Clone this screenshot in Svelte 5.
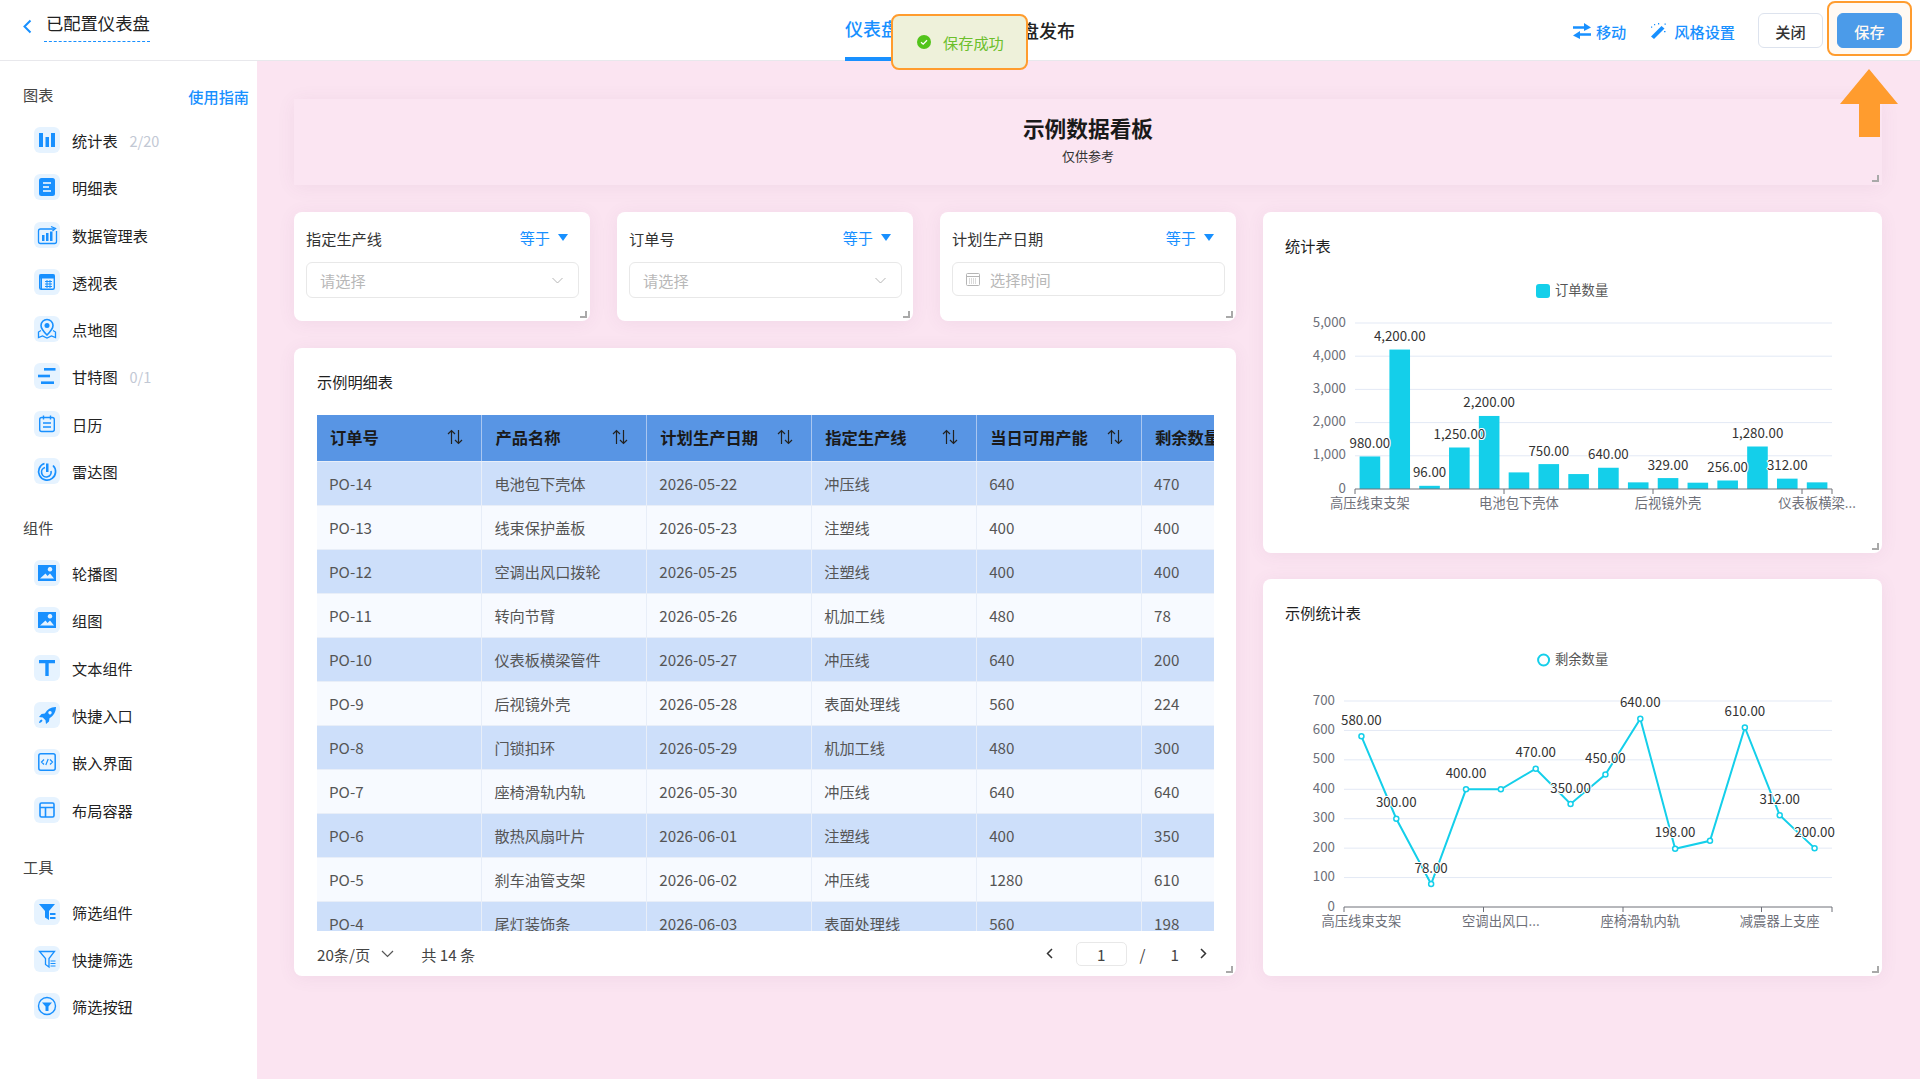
<script>
  const icons = {
    bar: '<rect x="5" y="6" width="4" height="14"/><rect x="11.5" y="10" width="3.5" height="10"/><rect x="17" y="6" width="4" height="14"/>',
    doc: '<rect x="5" y="4" width="16" height="18" rx="2.5"/><path d="M9 9h8M9 13h6M9 17h8" stroke="#fff" stroke-width="1.6" fill="none"/>',
    manage: '<g fill="none" stroke="#1890ff" stroke-width="1.3"><path d="M20 7H6.5a2 2 0 0 0-2 2v10.500a2 2 0 0 0 2 2h14a2 2 0 0 0 2-2V9"/><path d="M17 4.500l4.500 2-3 2.500" /></g><rect x="8" y="13" width="2.500" height="6"/><rect x="12" y="11" width="2.500" height="8"/><rect x="16" y="9.500" width="2.500" height="9.500"/>',
    pivot: '<g fill="none" stroke="#1890ff" stroke-width="1.400"><rect x="5.700" y="5.700" width="14.600" height="14.600" rx="1.500"/></g><rect x="5.500" y="5.500" width="15" height="4"/><rect x="6.500" y="9" width="1.500" height="11"/><path d="M11 12.500h7M11 15h7M11 17.500h7M13 11v8M16 11v8" stroke="#1890ff" fill="none" stroke-width="1"/>',
    map: '<path d="M13 3.500a6 6 0 0 0-6 6c0 3.500 4 7.500 6 9.500 2-2 6-6 6-9.500a6 6 0 0 0-6-6z" fill="none" stroke="#1890ff" stroke-width="1.600"/><circle cx="13" cy="9.500" r="2.500"/><path d="M7 14.500l-2.500 1.500v5.500l4-1.500 4.500 2 4.500-2 4 1.500v-5.500L19 14.500" fill="none" stroke="#1890ff" stroke-width="1.300"/>',
    gantt: '<rect x="10" y="5" width="11.500" height="2.600"/><rect x="4" y="11.700" width="12" height="2.600"/><rect x="7" y="18.400" width="13" height="2.600"/>',
    cal: '<g fill="none" stroke="#1890ff" stroke-width="1.400"><rect x="5.700" y="6.500" width="14.600" height="14" rx="2"/><path d="M9.500 4.500v4M16.500 4.500v4M9 12h8M9 16h8"/></g>',
    radar: '<g fill="none" stroke="#1890ff" stroke-width="1.700"><path d="M10.500 5.500a8.500 8.500 0 1 0 8.500 2"/><path d="M11 9.500a4.800 4.800 0 1 0 6 3.500"/></g><path d="M12 5.500v8.500h2.500V5.500z"/>',
    image: '<path fill-rule="evenodd" d="M4 5h18v16H4zM6 18.500h14l-4-5-2.500 2.500-2-2.500zM16 7a2.300 2.300 0 1 0 .01 0z"/>',
    text: '<path d="M5 5h16v3.200h-6.300V21h-3.400V8.200H5z"/>',
    rocket: '<path fill-rule="evenodd" d="M21.500 5c-5 .3-8.200 2.500-10.700 6.500L7.500 12 5 15l3.800.5 2.700 2.700.5 3.800 3-2.500.5-3.300c4-2.500 6.200-5.700 6.500-11.200zM16 9a1.700 1.700 0 1 0 .01 0z"/><path d="M7.500 17.500C6 18 5 19.500 5 21c1.500 0 3-1 3.500-2.500z"/>',
    embed: '<g fill="none" stroke="#1890ff"><rect x="4.800" y="4.800" width="16.400" height="16.400" rx="2" stroke-width="1.500"/><path d="M10 10.500L7.500 13l2.500 2.500M16 10.500l2.500 2.500-2.500 2.500M14.200 10l-2.400 6" stroke-width="1.200"/></g>',
    layout: '<g fill="none" stroke="#1890ff" stroke-width="1.600"><rect x="6" y="6" width="14" height="14" rx="1.500"/><path d="M6 10.500h14M11.500 10.500V20"/></g>',
    funnel: '<path d="M5 5h16l-6 7v9l-4-2.500V12z"/><rect x="16" y="14" width="5.500" height="2"/><rect x="16" y="18" width="5.500" height="2"/>',
    funnelo: '<path d="M5.500 5.500h15l-5.500 7v8.500l-3.500-2.500v-6z" fill="none" stroke="#1890ff" stroke-width="1.300"/><path d="M16.500 15h5M16.500 17.500h5M16.500 20h5" stroke="#1890ff" fill="none"/>',
    funnelb: '<circle cx="13" cy="13" r="8.500" fill="none" stroke="#1890ff" stroke-width="1.400"/><path d="M8 9.500h10l-3.500 4v4.500h-3v-4.500z"/>'
  };

  const groups = [
    { name: "图表", items: [["bar", "统计表", "2/20"], ["doc", "明细表"], ["manage", "数据管理表"], ["pivot", "透视表"], ["map", "点地图"], ["gantt", "甘特图", "0/1"], ["cal", "日历"], ["radar", "雷达图"]] },
    { name: "组件", items: [["image", "轮播图"], ["image", "组图"], ["text", "文本组件"], ["rocket", "快捷入口"], ["embed", "嵌入界面"], ["layout", "布局容器"]] },
    { name: "工具", items: [["funnel", "筛选组件"], ["funnelo", "快捷筛选"], ["funnelb", "筛选按钮"]] }
  ];

  const filters = [
    { label: "指定生产线", holder: "请选择" },
    { label: "订单号", holder: "请选择" },
    { label: "计划生产日期", holder: "选择时间", date: true }
  ];

  const columns = ["订单号", "产品名称", "计划生产日期", "指定生产线", "当日可用产能", "剩余数量"];
  const rows = [
    ["PO-14", "电池包下壳体", "2026-05-22", "冲压线", "640", "470"],
    ["PO-13", "线束保护盖板", "2026-05-23", "注塑线", "400", "400"],
    ["PO-12", "空调出风口拨轮", "2026-05-25", "注塑线", "400", "400"],
    ["PO-11", "转向节臂", "2026-05-26", "机加工线", "480", "78"],
    ["PO-10", "仪表板横梁管件", "2026-05-27", "冲压线", "640", "200"],
    ["PO-9", "后视镜外壳", "2026-05-28", "表面处理线", "560", "224"],
    ["PO-8", "门锁扣环", "2026-05-29", "机加工线", "480", "300"],
    ["PO-7", "座椅滑轨内轨", "2026-05-30", "冲压线", "640", "640"],
    ["PO-6", "散热风扇叶片", "2026-06-01", "注塑线", "400", "350"],
    ["PO-5", "刹车油管支架", "2026-06-02", "冲压线", "1280", "610"],
    ["PO-4", "尾灯装饰条", "2026-06-03", "表面处理线", "560", "198"]
  ];

  // bar chart, page coordinates
  const barVals = [980, 4200, 96, 1250, 2200, 500, 750, 450, 640, 200, 329, 190, 256, 1280, 312, 200];
  const barShown = [0, 1, 2, 3, 4, 6, 8, 10, 12, 13, 14];
  const barStep = 477 / 16;
  const barX = (i) => 1355 + (i + 0.5) * barStep;
  const barY = (v) => 489 - (v / 5000) * 166;
  const barTicks = [0, 1000, 2000, 3000, 4000, 5000];
  const barCats = [[0, "高压线束支架"], [5, "电池包下壳体"], [10, "后视镜外壳"], [15, "仪表板横梁..."]];

  const lineVals = [580, 300, 78, 400, 400, 470, 350, 450, 640, 198, 225, 610, 312, 200];
  const lineShown = [0, 1, 2, 3, 5, 6, 7, 8, 9, 11, 12, 13];
  const lineStep = 488 / 14;
  const lineX = (i) => 1344 + (i + 0.5) * lineStep;
  const lineY = (v) => 907 - (v / 700) * 206;
  const lineTicks = [0, 100, 200, 300, 400, 500, 600, 700];
  const lineCats = [[0, "高压线束支架"], [4, "空调出风口..."], [8, "座椅滑轨内轨"], [12, "减震器上支座"]];
  const linePoints = lineVals.map((v, i) => `${lineX(i)},${lineY(v)}`).join(" ");
  const fmt = (v) => v.toLocaleString("en-US", { minimumFractionDigits: 2 });
</script>

<div class="page">
  <header>
    <div class="head-left">
      <svg class="back" width="10" height="15" viewBox="0 0 10 15"><path d="M8.500 1.500L2.500 7.500l6 6" fill="none" stroke="#1890ff" stroke-width="2" /></svg>
      <span class="head-title">已配置仪表盘</span>
    </div>
    <nav>
      <span class="tab active">仪表盘配置</span>
      <span class="tab">仪表盘发布</span>
    </nav>
    <div class="head-right">
      <span class="action">
        <svg width="18" height="16" viewBox="0 0 18 16" fill="#1890ff"><path d="M11 0l7 4.500L11 8V5.700H0V3.300h11zM7 8v2.300h11v2.400H7V16l-7-3.500z" /></svg>
        移动
      </span>
      <span class="action style">
        <svg width="16" height="16" viewBox="0 0 16 16" fill="#1890ff"><path d="M11.500 3l3 2.500L4 16l-3-2.500z" /><path d="M4 1h1.200v1.200H4zM8 0h1.200v1.500H8zM14 8h1.500v1.200H14zM1 3.500h1.200v1.200H1zM14.500 0.500h1.300v1.300h-1.300z" /></svg>
        风格设置
      </span>
      <button class="btn">关闭</button>
      <button class="btn primary">保存</button>
    </div>
  </header>

  <div class="body">
    <aside>
      {#each groups as group, g}
        <div class="group">
          <div class="group-head">
            <span>{group.name}</span>
            {#if g === 0}<a href="#guide">使用指南</a>{/if}
          </div>
          {#each group.items as item}
            <div class="item">
              <span class="tile"><svg width="26" height="26" viewBox="0 0 26 26" fill="#1890ff">{@html icons[item[0]]}</svg></span>
              <span class="item-name">{item[1]}</span>
              {#if item[2]}<span class="count">{item[2]}</span>{/if}
            </div>
          {/each}
        </div>
      {/each}
    </aside>

    <main>
      <section class="title-card card">
        <h1>示例数据看板</h1>
        <p>仅供参考</p>
      </section>

      <div class="columns">
        <div class="left">
          <div class="filters">
            {#each filters as f}
              <section class="filter card">
                <div class="filter-head">
                  <span>{f.label}</span>
                  <span class="op">等于<i class="caret"></i></span>
                </div>
                {#if f.date}
                  <div class="input date">
                    <svg width="14" height="14" viewBox="0 0 14 14" fill="none" stroke="#b5b5b5"><rect x=".5" y="1.500" width="13" height="12" rx="1" /><path d="M.5 4.500h13" /><path d="M3 7h8M3 9h8M3 11h8" stroke-dasharray="1 1" /></svg>
                    <span>{f.holder}</span>
                  </div>
                {:else}
                  <div class="input">
                    <span>{f.holder}</span>
                    <svg width="11" height="7" viewBox="0 0 11 7"><path d="M.5 1l5 5 5-5" fill="none" stroke="#b5b5b5" /></svg>
                  </div>
                {/if}
              </section>
            {/each}
          </div>

          <section class="table-card card">
            <h2>示例明细表</h2>
            <div class="table-wrap">
              <table>
                <thead>
                  <tr>
                    {#each columns as c, i}
                      <th>
                        <div class="th">
                          <span>{c}</span>
                          {#if i < 5}
                            <svg width="16" height="16" viewBox="0 0 16 16" fill="none" stroke="#222" stroke-width="1.200"><path d="M4.500 15V1.500M1 5l3.500-3.500L8 5M11.500 1v13.500M8 11l3.500 3.500L15 11" /></svg>
                          {/if}
                        </div>
                      </th>
                    {/each}
                  </tr>
                </thead>
                <tbody>
                  {#each rows as row}
                    <tr>
                      {#each row as cell}<td>{cell}</td>{/each}
                    </tr>
                  {/each}
                </tbody>
              </table>
            </div>
            <div class="pager">
              <span>20条/页</span>
              <svg class="pg-down" width="13" height="8" viewBox="0 0 13 8"><path d="M1 1l5.500 5.500L12 1" fill="none" stroke="#555" stroke-width="1.200" /></svg>
              <span class="total">共 14 条</span>
              <span class="spacer"></span>
              <svg width="7" height="11" viewBox="0 0 7 11"><path d="M6 1L1.500 5.500 6 10" fill="none" stroke="#333" stroke-width="1.500" /></svg>
              <span class="page-input">1</span>
              <span>/</span>
              <span class="page-total">1</span>
              <svg width="7" height="11" viewBox="0 0 7 11"><path d="M1 1l4.500 4.500L1 10" fill="none" stroke="#333" stroke-width="1.500" /></svg>
            </div>
          </section>
        </div>

        <div class="right">
          <section class="chart-card card">
            <h2>统计表</h2>
            <svg class="chart" width="619" height="283" viewBox="1263 270 619 283">
              <rect x="1536" y="284" width="14" height="14" rx="3" fill="#14cfea" />
              <text x="1555" y="295" class="lg">订单数量</text>
              {#each barTicks as t}
                {#if t > 0}<line x1="1355" x2="1832" y1={barY(t)} y2={barY(t)} stroke="#e3e9f5" />{/if}
                <text x="1346" y={barY(t) + 3.500} text-anchor="end" class="ax">{t.toLocaleString("en-US")}</text>
              {/each}
              {#each barVals as v, i}
                <rect x={barX(i) - 10.300} y={barY(v)} width="20.600" height={489 - barY(v)} fill="#14cfea" />
              {/each}
              <path d="M1355 494V489H1832V494M1504 489v5M1653 489v5M1802 489v5" fill="none" stroke="#6e7079" stroke-width="1" />
              {#each barShown as i}
                <text x={barX(i)} y={barY(barVals[i]) - 8.500} text-anchor="middle" class="val">{fmt(barVals[i])}</text>
              {/each}
              {#each barCats as c}
                <text x={barX(c[0])} y="508" text-anchor="middle" class="ax">{c[1]}</text>
              {/each}
            </svg>
          </section>

          <section class="chart-card card tall">
            <h2>示例统计表</h2>
            <svg class="chart" width="619" height="339" viewBox="1263 637 619 339">
              <circle cx="1543.600" cy="660" r="5.500" fill="#fff" stroke="#14cfea" stroke-width="2" />
              <text x="1555" y="664" class="lg">剩余数量</text>
              {#each lineTicks as t}
                {#if t > 0}<line x1="1344" x2="1832" y1={lineY(t)} y2={lineY(t)} stroke="#e3e9f5" />{/if}
                <text x="1335" y={lineY(t) + 3.500} text-anchor="end" class="ax">{t}</text>
              {/each}
              <path d="M1344 912V907H1832V912M1483.500 907v5M1623 907v5M1761.500 907v5" fill="none" stroke="#6e7079" stroke-width="1" />
              <polyline points={linePoints} fill="none" stroke="#14cfea" stroke-width="2" />
              {#each lineVals as v, i}
                <circle cx={lineX(i)} cy={lineY(v)} r="2.500" fill="#fff" stroke="#14cfea" stroke-width="1.500" />
              {/each}
              {#each lineShown as i}
                <text x={lineX(i)} y={lineY(lineVals[i]) - 11.500} text-anchor="middle" class="val">{fmt(lineVals[i])}</text>
              {/each}
              {#each lineCats as c}
                <text x={lineX(c[0])} y="926" text-anchor="middle" class="ax">{c[1]}</text>
              {/each}
            </svg>
          </section>
        </div>
      </div>
    </main>
  </div>

  <div class="toast">
    <svg width="14" height="14" viewBox="0 0 14 14"><circle cx="7" cy="7" r="7" fill="#52c41a" /><path d="M4 7.200l2.200 2L10 5.200" fill="none" stroke="#fff" stroke-width="1.300" /></svg>
    <span>保存成功</span>
  </div>
  <div class="save-ring"></div>
  <svg class="arrow" width="60" height="69" viewBox="0 0 60 69"><path d="M30 0L59 35H41V68H20V35H1z" fill="#ff9c2e" /></svg>
</div>

<style>
  :global(body) {
    margin: 0;
    font-family: "Noto Sans CJK SC", "Noto Sans", sans-serif;
    color: #222;
  }

  .page {
    position: relative;
    width: 1920px;
    height: 1079px;
    overflow: hidden;
    background: #fbe4f1;
  }

  header {
    display: grid;
    grid-template-columns: 1fr auto 1fr;
    align-items: center;
    height: 60px;
    background: #fff;
    border-bottom: 1px solid #e8e8ec;
  }

  .head-left {
    display: flex;
    align-items: center;
    padding-left: 22px;
    height: 100%;
  }

  .back {
    margin-right: 12px;
    margin-top: -9px;
  }

  .head-title {
    font-size: 17.300px;
    line-height: 24px;
    padding: 0 0 6px 2px;
    margin-top: -8px;
    border-bottom: 1px dashed #1890ff;
  }

  nav {
    display: flex;
    gap: 50px;
    height: 100%;
  }

  .tab {
    display: flex;
    align-items: center;
    font-size: 18px;
    font-weight: 500;
    padding-bottom: 1px;
    box-sizing: border-box;
    height: 61px;
  }

  .tab.active {
    color: #1890ff;
    border-bottom: 4px solid #1890ff;
  }

  .head-right {
    display: flex;
    align-items: center;
    justify-content: flex-end;
    padding-right: 18px;
    height: 100%;
  }

  .action {
    display: flex;
    align-items: center;
    gap: 5px;
    color: #1890ff;
    font-size: 15.200px;
    font-weight: 500;
    margin-right: 24px;
  }

  .action.style {
    gap: 8px;
    margin-right: 23px;
  }

  .btn {
    width: 65px;
    height: 35px;
    border: 1px solid #dde3ee;
    border-radius: 6px;
    background: #fff;
    color: #333;
    font: 500 15.200px "Noto Sans CJK SC", sans-serif;
    padding: 0;
  }

  .btn.primary {
    margin-left: 14px;
    background: #409cf5;
    border-color: #409cf5;
    color: #fff;
  }

  .body {
    display: flex;
    height: 1018px;
  }

  aside {
    flex: none;
    width: 257px;
    box-sizing: border-box;
    background: #fff;
    padding: 21px 8px 0 23px;
  }

  .group {
    margin-bottom: 31px;
  }

  .group-head {
    display: flex;
    justify-content: space-between;
    align-items: flex-end;
    height: 24px;
    margin-bottom: 21px;
    font-size: 15.200px;
    color: #444;
    line-height: 24px;
  }

  .group-head a {
    color: #1890ff;
    font-weight: 500;
    text-decoration: none;
    margin-bottom: -2px;
  }

  .item {
    display: flex;
    align-items: center;
    height: 26px;
    padding-left: 11px;
    margin-bottom: 21.300px;
    font-size: 15.200px;
  }

  .item:last-child {
    margin-bottom: 0;
  }

  .tile {
    width: 26px;
    height: 26px;
    border-radius: 6px;
    background: #e6f3ff;
    margin-right: 12px;
    flex: none;
  }

  .tile svg {
    display: block;
  }

  .count {
    margin-left: 12px;
    color: #c2c8d4;
    font-size: 14.500px;
  }

  main {
    flex: 1;
    padding: 38px 38px 0 37px;
  }

  .card {
    position: relative;
    background: #fff;
    border-radius: 8px;
    box-shadow: 0 2px 18px rgba(120, 70, 110, 0.07);
    box-sizing: border-box;
  }

  .card::after {
    content: "";
    position: absolute;
    right: 3px;
    bottom: 3px;
    width: 5px;
    height: 5px;
    border-right: 2px solid #a9a9a9;
    border-bottom: 2px solid #a9a9a9;
  }

  .title-card {
    height: 86px;
    background: #fbe5f2;
    border-radius: 0;
    text-align: center;
    padding-top: 14px;
  }

  h1 {
    margin: 0;
    font-size: 21.700px;
    line-height: 30px;
    font-weight: 700;
    color: #1a1a1a;
  }

  .title-card p {
    margin: 4px 0 0;
    font-size: 13px;
    line-height: 18px;
    color: #333;
  }

  .columns {
    display: flex;
    gap: 27px;
    margin-top: 27px;
  }

  .left {
    width: 942px;
    flex: none;
  }

  .right {
    width: 619px;
    flex: none;
    display: flex;
    flex-direction: column;
    gap: 26px;
  }

  .filters {
    display: flex;
    gap: 27px;
  }

  .filter {
    width: 296px;
    height: 109px;
    padding: 15px 11px 0 12px;
    flex: none;
  }

  .filter-head {
    display: flex;
    justify-content: space-between;
    height: 22px;
    line-height: 22px;
    font-size: 15.200px;
    color: #333;
  }

  .op {
    display: flex;
    align-items: center;
    color: #1890ff;
    margin-top: -2px;
    padding-right: 11px;
  }

  .caret {
    width: 0;
    height: 0;
    margin-left: 8px;
    border-left: 5px solid transparent;
    border-right: 5px solid transparent;
    border-top: 7px solid #1890ff;
  }

  .input {
    display: flex;
    align-items: center;
    justify-content: space-between;
    height: 36px;
    margin-top: 13px;
    padding: 0 15px 0 13px;
    border: 1px solid #e8e8e8;
    border-radius: 6px;
    box-sizing: border-box;
    font-size: 15.200px;
    color: #b8b8b8;
    background: #fff;
  }

  .input.date {
    justify-content: flex-start;
    gap: 10px;
    height: 34px;
  }

  .table-card {
    margin-top: 27px;
    height: 628px;
    padding: 0 23px;
  }

  h2 {
    margin: 0;
    font-size: 15.200px;
    line-height: 22px;
    font-weight: 400;
    color: #1f1f1f;
  }

  .table-card h2 {
    padding-top: 22px;
    height: 45px;
  }

  .table-wrap {
    width: 897px;
    height: 516px;
    overflow: hidden;
    background: #fff;
    box-shadow: inset 0 0 0 1px #e8eef8;
  }

  table {
    width: 990px;
    table-layout: fixed;
    border-collapse: collapse;
    font-size: 15.200px;
  }

  th {
    height: 46px;
    padding: 0 18px 2px 13px;
    background: #5895e4;
    border-right: 1px solid #a9c6f0;
    border-bottom: 1px solid #e8eef8;
    font-size: 16.300px;
    font-weight: 700;
    color: #1a1a1a;
    white-space: nowrap;
    overflow: hidden;
    box-sizing: border-box;
  }

  .th {
    display: flex;
    align-items: center;
    justify-content: space-between;
  }

  td {
    height: 44px;
    padding: 0 0 1px 12px;
    color: #555;
    border-right: 1px solid #e8eef8;
    border-bottom: 1px solid #e8eef8;
    box-sizing: border-box;
  }

  tbody tr:nth-child(odd) td {
    background: #cddffa;
  }

  tbody tr:nth-child(even) td {
    background: #f7faff;
  }

  .pager {
    display: flex;
    align-items: center;
    height: 45px;
    padding-right: 6px;
    font-size: 15.200px;
    color: #444;
  }

  .pg-down {
    margin-left: 11px;
  }

  .total {
    margin-left: 27px;
  }

  .spacer {
    flex: 1;
  }

  .page-input {
    width: 51px;
    height: 24px;
    line-height: 23px;
    text-align: center;
    margin: 0 13px 0 23px;
    border: 1px solid #e8e8e8;
    border-radius: 5px;
    box-sizing: border-box;
  }

  .page-total {
    margin: 0 21px 0 25px;
  }

  .chart-card {
    height: 341px;
  }

  .chart-card.tall {
    height: 397px;
  }

  .chart-card h2 {
    height: 58px;
    box-sizing: border-box;
    padding: 22px 0 0 22px;
  }

  .chart {
    display: block;
  }

  .ax {
    font-size: 13.300px;
    fill: #6e7079;
  }

  .lg {
    font-size: 13.300px;
    fill: #555;
  }

  .val {
    font-size: 13.300px;
    fill: #333;
    stroke: #fff;
    stroke-width: 2px;
    paint-order: stroke;
  }

  .toast {
    position: absolute;
    left: 891px;
    top: 14px;
    width: 137px;
    height: 56px;
    box-sizing: border-box;
    display: flex;
    align-items: center;
    gap: 12px;
    padding-left: 24px;
    border: 2px solid #ff9c2e;
    border-radius: 8px;
    background: #eef1da;
    color: #6bbf2b;
    font-size: 15.200px;
  }

  .save-ring {
    position: absolute;
    left: 1827px;
    top: 1px;
    width: 85px;
    height: 55px;
    box-sizing: border-box;
    border: 2px solid #ff9c2e;
    border-radius: 8px;
    background: rgba(255, 156, 46, 0.06);
  }

  .arrow {
    position: absolute;
    left: 1839px;
    top: 69px;
  }
</style>
